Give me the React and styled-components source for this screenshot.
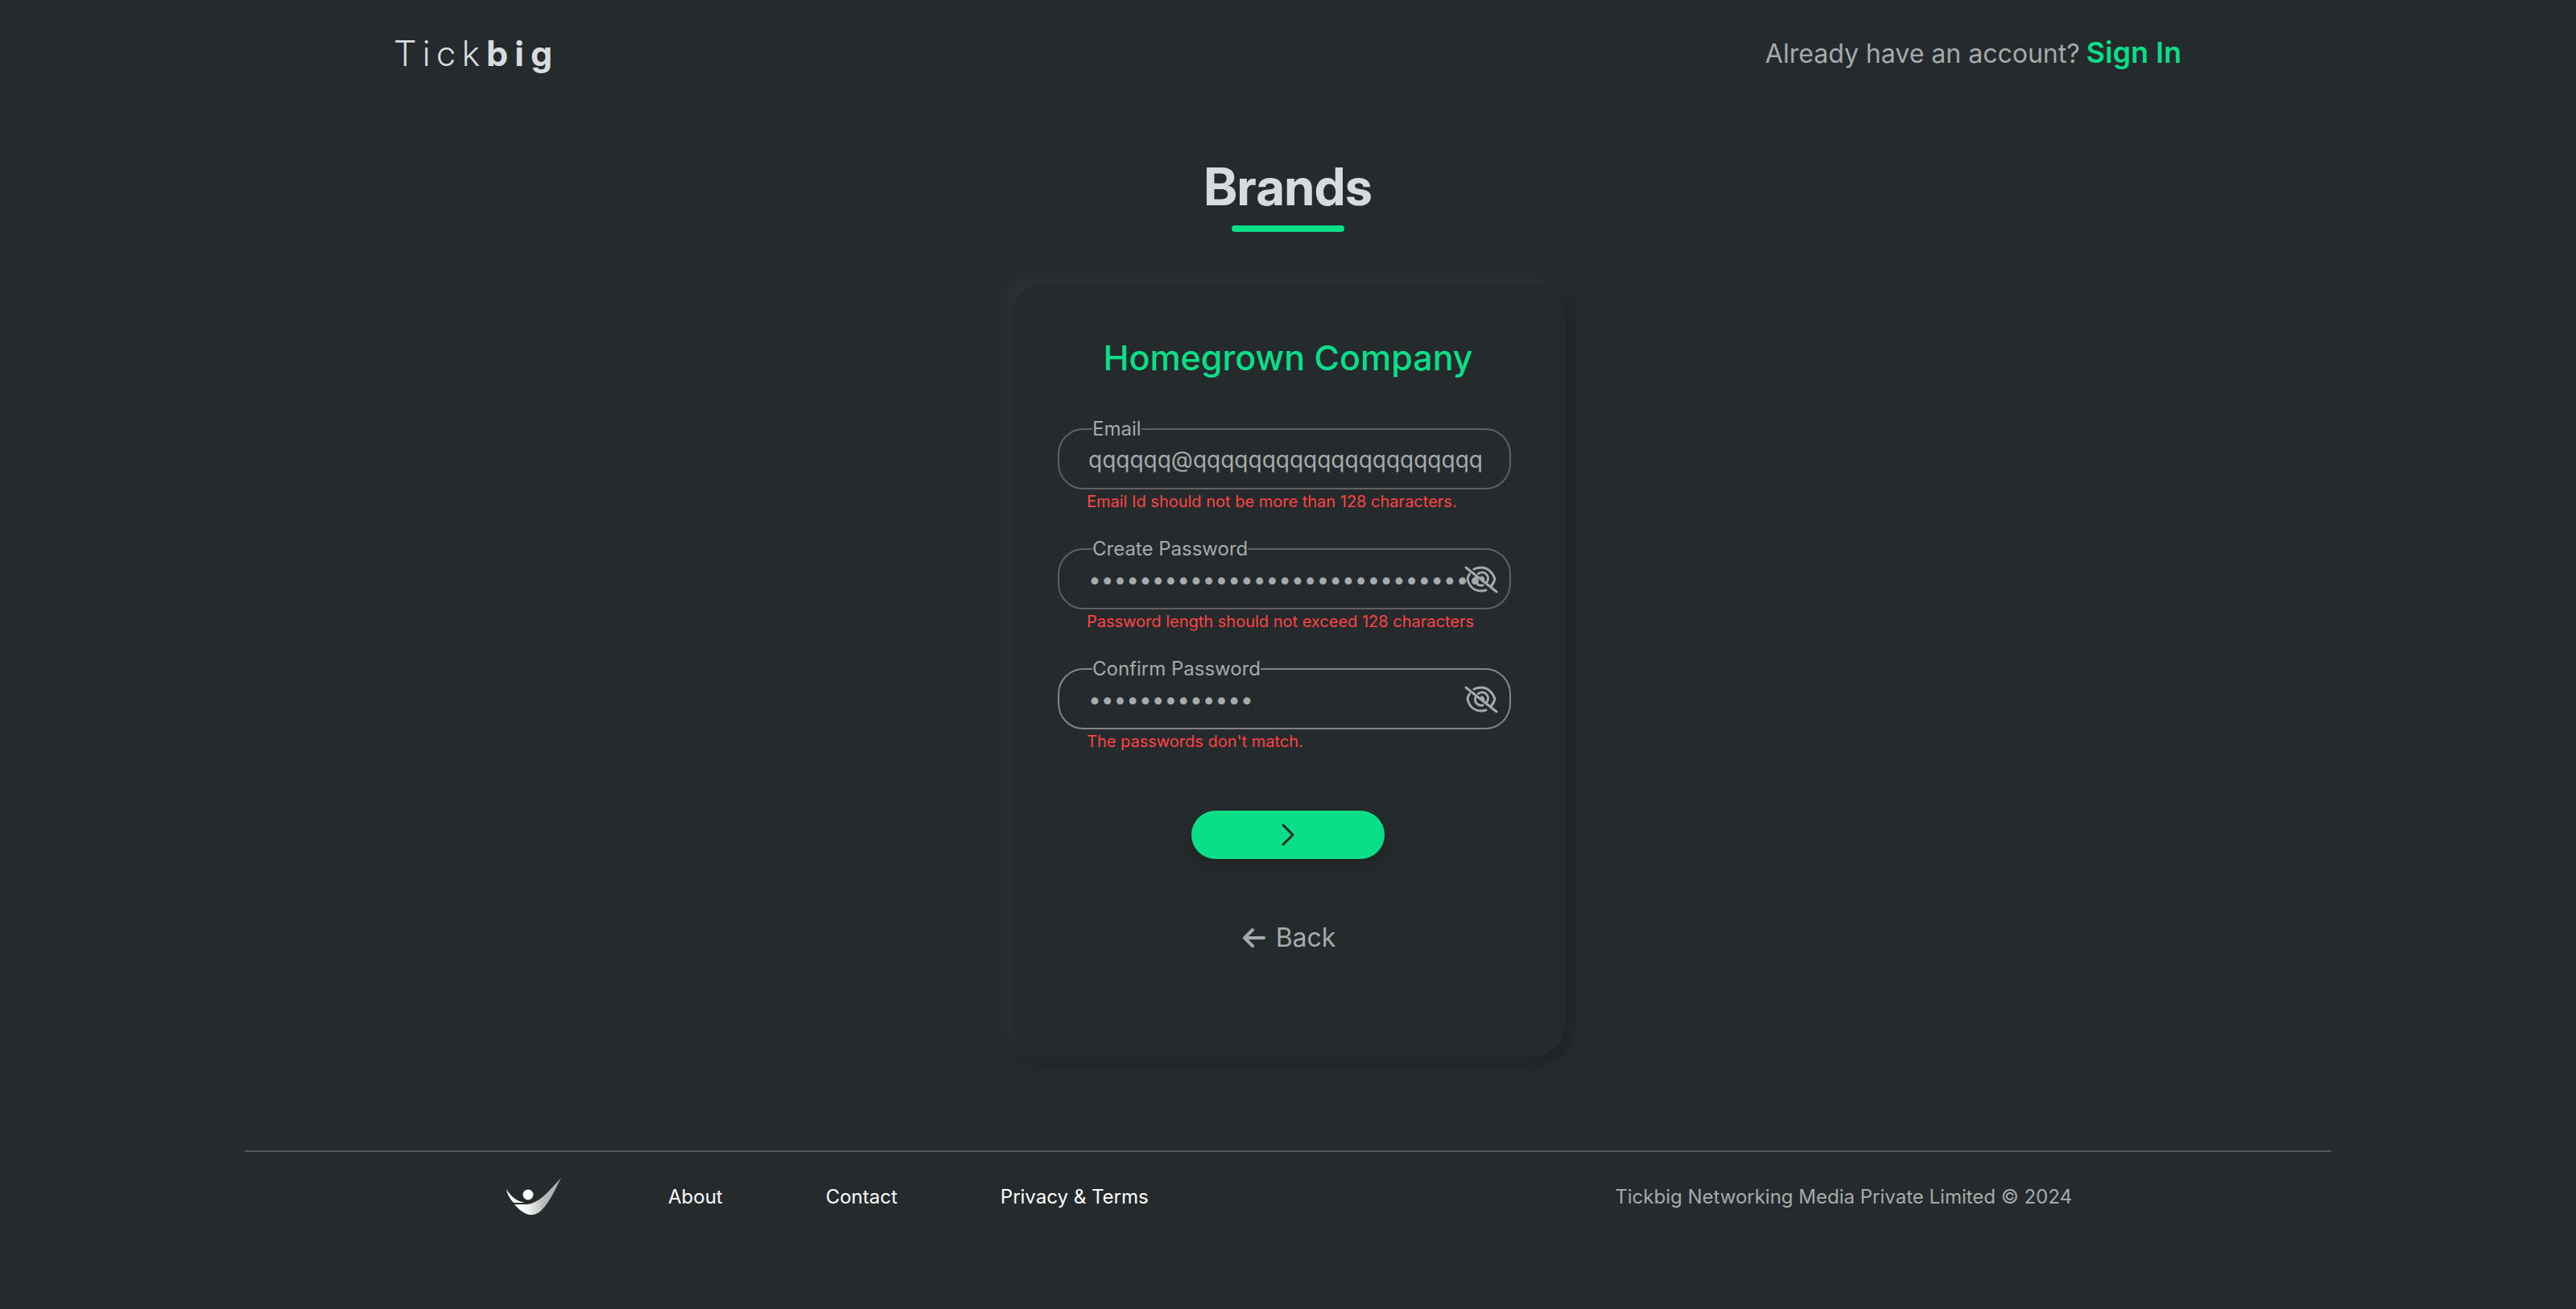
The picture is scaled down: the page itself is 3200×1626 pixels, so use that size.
import React, { useState } from "react";
import styled, { createGlobalStyle } from "styled-components";

const GlobalStyle = createGlobalStyle`
  *, *::before, *::after { box-sizing: border-box; }
  body {
    margin: 0;
    background: #252a2d;
    color: #a6aaab;
    font-family: Inter, "Liberation Sans", sans-serif;
  }
`;

const Page = styled.div`
  display: flex;
  flex-direction: column;
  min-height: 100vh;
`;

const Header = styled.header`
  display: flex;
  align-items: center;
  justify-content: space-between;
  padding: 37px 15% 0;
`;

const Brand = styled.a`
  color: #d7dbdd;
  font-family: "Inter Display", Inter, "Liberation Sans", sans-serif;
  font-size: 44px;
  line-height: 56px;
  font-weight: 300;
  letter-spacing: 9px;
  text-decoration: none;
  margin-left: 10px;
  strong { font-weight: 700; }
`;

const Account = styled.p`
  display: flex;
  align-items: baseline;
  gap: 8px;
  margin: 2px 10px 0 0;
  font-size: 32px;
  line-height: 56px;
`;

const SignIn = styled.a`
  color: #0adf88;
  font-size: 36px;
  line-height: 52px;
  font-weight: 600;
  text-decoration: none;
`;

const Main = styled.main`
  display: flex;
  flex-direction: column;
  align-items: center;
  padding-top: 97px;
`;

const Title = styled.h1`
  display: flex;
  flex-direction: column;
  align-items: center;
  gap: 8px;
  margin: 0 0 64px;
  color: #d7dbdd;
  font-family: "Inter Display", Inter, "Liberation Sans", sans-serif;
  font-size: 64px;
  line-height: 80px;
  font-weight: 700;
  &::after {
    content: "";
    width: 140px;
    height: 8px;
    border-radius: 4px;
    background: #0adf88;
  }
`;

const Card = styled.form`
  display: flex;
  flex-direction: column;
  align-items: center;
  width: 688px;
  max-width: 100%;
  padding: 62px 58px 114px;
  border-radius: 40px;
  box-shadow: -10px -10px 20px #2b3235, 8px 8px 16px #202426;
`;

const CardTitle = styled.h2`
  margin: 0 0 45px;
  color: #0adf88;
  font-size: 43px;
  line-height: 60px;
  font-weight: 500;
`;

const Field = styled.div`
  display: flex;
  flex-direction: column;
  width: 100%;
  height: 149px;
`;

const Outline = styled.fieldset`
  display: flex;
  align-items: center;
  width: 563px;
  max-width: 100%;
  height: 89px;
  margin: 0;
  padding: 0 14px 2px 36px;
  border: 2px solid ${(p) => (p.$active ? "#858585" : "#606060")};
  border-radius: 32px;
`;

const Legend = styled.legend`
  margin-left: 5px;
  padding: 0;
  font-size: 24px;
  line-height: 28px;
`;

const InputRow = styled.div`
  position: relative;
  display: flex;
  align-items: center;
  height: 48px;
  flex: 1;
`;

const Input = styled.input`
  width: 488px;
  height: 48px;
  padding: 0;
  border: 0;
  outline: 0;
  background: transparent;
  color: #a6aaab;
  font: 400 28px/48px Inter, "Liberation Sans", sans-serif;
`;

const Toggle = styled.button`
  position: absolute;
  right: 0;
  top: 4px;
  display: flex;
  padding: 0;
  border: 0;
  background: none;
  color: #a6aaab;
  cursor: pointer;
`;

const ErrorText = styled.p`
  margin: 3px 0 0 36px;
  color: #ff4343;
  font-size: 20px;
  line-height: 24px;
`;

const Submit = styled.button`
  display: flex;
  align-items: center;
  justify-content: center;
  width: 240px;
  height: 60px;
  margin: 41px 0 64px;
  padding: 0;
  border: 0;
  border-radius: 30px;
  background: #0adf88;
  color: #252a2d;
  box-shadow: 0 12px 20px #212528;
  cursor: pointer;
`;

const Back = styled.button`
  display: flex;
  align-items: center;
  gap: 12px;
  padding: 0;
  border: 0;
  background: none;
  color: #a6aaab;
  font: 400 32px/68px Inter, "Liberation Sans", sans-serif;
  cursor: pointer;
`;

const Footer = styled.footer`
  display: flex;
  align-items: center;
  justify-content: space-between;
  margin: 116px 9.5% 0;
  padding: 28px 322px 0;
  border-top: 2px solid #54585b;
  font-size: 24px;
  line-height: 56px;
`;

const FooterNav = styled.nav`
  display: flex;
  align-items: center;
  gap: 128px;
`;

const FooterLink = styled.a`
  display: flex;
  color: #ffffff;
  text-decoration: none;
`;

const EyeOffIcon = () => (
  <svg width="42" height="40" viewBox="0 0 42 40" fill="none" stroke="currentColor" strokeWidth="3" strokeLinecap="round" aria-hidden="true">
    <path d="M2 5 40 35" />
    <path d="M12 7Q16 5 21 5C29 5 35.500 11 38 19.500Q36.500 24 33.500 28" />
    <path d="M6.500 13Q4.500 16 4 19.500C6 28 12 34 21 34Q24 34 27 33" />
    <path d="M17.500 12.500A7.500 7.500 0 0 1 28 23" />
    <path d="M14 17A7.500 7.500 0 0 0 23 27" />
    <path d="M21.500 17A4 4 0 0 1 24 20" />
  </svg>
);

const ChevronIcon = () => (
  <svg width="24" height="32" viewBox="0 0 24 32" fill="none" stroke="currentColor" strokeWidth="3" strokeLinecap="round" strokeLinejoin="round" aria-hidden="true">
    <path d="m6 4 12 12L6 28" />
  </svg>
);

const ArrowIcon = () => (
  <svg width="32" height="28" viewBox="0 0 32 28" fill="none" stroke="currentColor" strokeWidth="4" strokeLinecap="round" strokeLinejoin="round" aria-hidden="true">
    <path d="M29 14H5M15 4 5 14l10 10" />
  </svg>
);

const LogoIcon = () => (
  <svg width="76" height="56" viewBox="1 0 76 56" role="img" aria-label="Tickbig home">
    <defs>
      <linearGradient id="wing" x1="10" y1="0" x2="70" y2="0" gradientUnits="userSpaceOnUse">
        <stop offset="0" stopColor="#fff" />
        <stop offset=".35" stopColor="#f4f4f4" />
        <stop offset=".65" stopColor="#bcbcbc" />
        <stop offset="1" stopColor="#a8a8a8" />
      </linearGradient>
    </defs>
    <circle cx="31" cy="25" r="6.500" fill="#fff" />
    <path d="M4 18C10 28 17 33 27 35H13C9 31 5 24 4 18Z" fill="#fff" />
    <path d="M14 37H30C46 35 57 20 72 4C65 18 58 34 47 45C37 54 26 51 14 37Z" fill="url(#wing)" />
  </svg>
);

const FIELDS = [
  { id: "email", label: "Email", type: "email", value: "qqqqqq@qqqqqqqqqqqqqqqqqqqqq", error: "Email Id should not be more than 128 characters." },
  { id: "password", label: "Create Password", type: "password", value: "q".repeat(140), error: "Password length should not exceed 128 characters" },
  { id: "confirm", label: "Confirm Password", type: "password", value: "q".repeat(13), error: "The passwords don't match.", active: true },
];

function FormField({ id, label, type, value, error, active }) {
  const [text, setText] = useState(value);
  const [visible, setVisible] = useState(false);
  const secret = type === "password";
  return (
    <Field>
      <Outline $active={active}>
        <Legend><label htmlFor={id}>{label}</label></Legend>
        <InputRow>
          <Input
            id={id}
            type={secret && visible ? "text" : type}
            value={text}
            onChange={(e) => setText(e.target.value)}
            aria-describedby={`${id}-error`}
          />
          {secret && (
            <Toggle type="button" aria-label="Toggle password visibility" onClick={() => setVisible(!visible)}>
              <EyeOffIcon />
            </Toggle>
          )}
        </InputRow>
      </Outline>
      <ErrorText id={`${id}-error`}>{error}</ErrorText>
    </Field>
  );
}

export default function App() {
  return (
    <Page>
      <GlobalStyle />
      <Header>
        <Brand href="#">Tick<strong>big</strong></Brand>
        <Account>Already have an account? <SignIn href="#signin">Sign In</SignIn></Account>
      </Header>
      <Main>
        <Title>Brands</Title>
        <Card onSubmit={(e) => e.preventDefault()}>
          <CardTitle>Homegrown Company</CardTitle>
          {FIELDS.map((field) => <FormField key={field.id} {...field} />)}
          <Submit type="submit" aria-label="Continue"><ChevronIcon /></Submit>
          <Back type="button"><ArrowIcon />Back</Back>
        </Card>
      </Main>
      <Footer>
        <FooterNav>
          <FooterLink href="#"><LogoIcon /></FooterLink>
          <FooterLink href="#about">About</FooterLink>
          <FooterLink href="#contact">Contact</FooterLink>
          <FooterLink href="#privacy">Privacy &amp; Terms</FooterLink>
        </FooterNav>
        <span>Tickbig Networking Media Private Limited © 2024</span>
      </Footer>
    </Page>
  );
}
